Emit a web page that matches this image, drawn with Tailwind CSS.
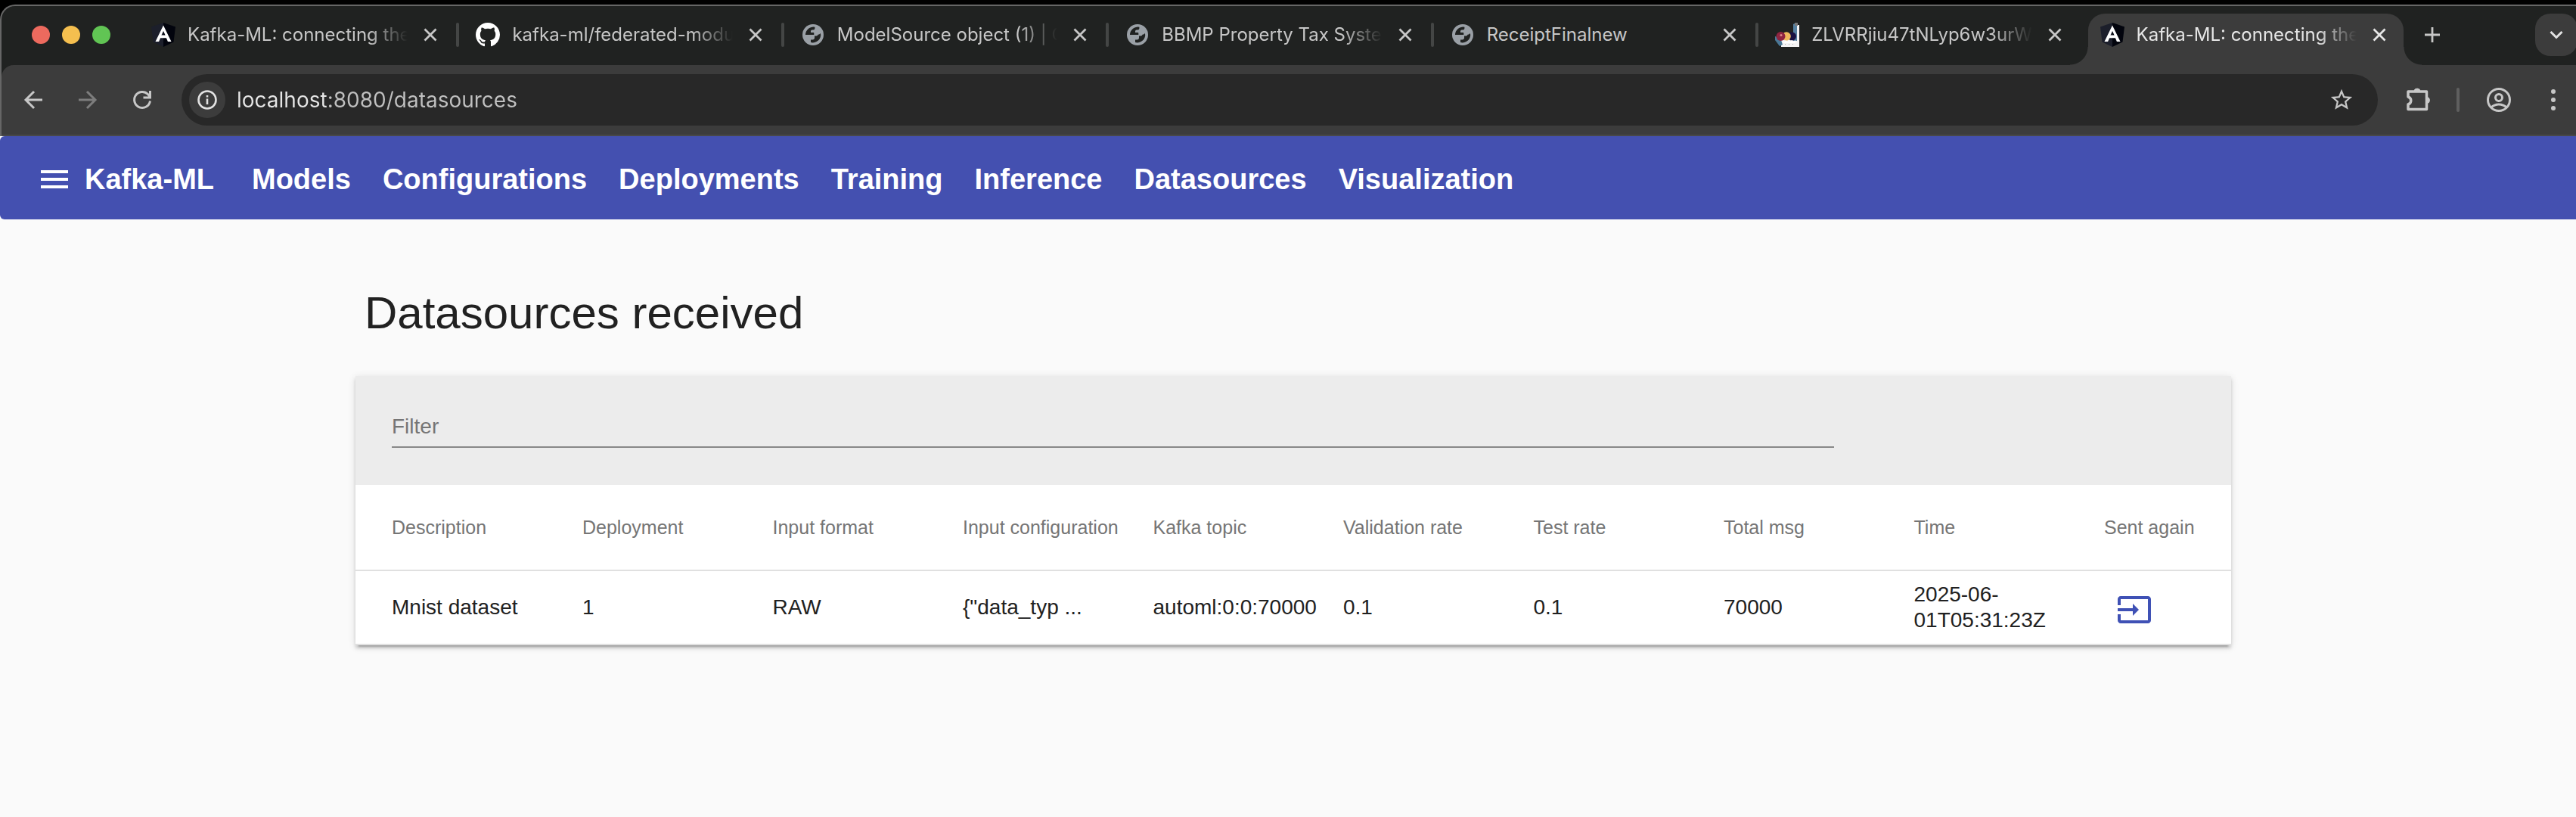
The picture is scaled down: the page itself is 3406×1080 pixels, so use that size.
<!DOCTYPE html>
<html lang="en">
<head>
<meta charset="utf-8">
<title>Kafka-ML: connecting the data stream</title>
<script src="https://cdn.jsdelivr.net/npm/@tailwindcss/browser@4"></script>
</head>
<body class="min-h-screen bg-[#fafafa] font-['Liberation_Sans',Arial,sans-serif] text-[#212121]">

<svg class="hidden" aria-hidden="true">
  <symbol id="close" viewBox="0 0 24 24"><path d="M4.5 4.5l15 15M19.5 4.5l-15 15" fill="none" stroke="currentColor" stroke-width="2.8"/></symbol>
  <symbol id="angular" viewBox="0 0 32 32">
    <path d="M16 0L0 5.5l2.5 20L16 32z" fill="#1c1f2b"/><path d="M16 0l16 5.5-2.5 20L16 32z" fill="#02040d"/>
    <path d="M16 3.5L5.5 25h4.6l2-4.8h7.8l2 4.8h4.6zM16 11l2.6 5.6h-5.2z" fill="#fff" fill-rule="evenodd"/>
  </symbol>
  <symbol id="globe" viewBox="0 0 32 32">
    <circle cx="16" cy="16" r="14" fill="#9aa0a6"/>
    <path d="M6 16A10.4 10.4 0 0 1 18.4 5.8V7.500a2 2 0 0 1-2 2h-1.600a2 2 0 0 0-1.800 2V13h3.500a1 1 0 0 1 .8 1v2z" fill="#202221"/>
    <path d="M26 14A10.400 10.400 0 0 1 13 26v-3.400h2.500a2.500 2.500 0 0 0 2.500-2.400V17.500h2.500a2 2 0 0 0 2-1.800l1.500-.2z" fill="#202221"/>
  </symbol>
</svg>

<div class="bg-black pt-1.5">
  <header class="overflow-hidden rounded-tl-[20px] border-t-2 border-l-2 border-[#666] bg-[#202221] font-['Inter',sans-serif] text-[#c7c7c7]">
    <div class="flex h-[78px] items-start pt-2.5">
      <div class="flex h-14 w-44 shrink-0 items-center gap-4 pl-10">
        <button class="size-6 rounded-full bg-[#ed6a5e]" aria-label="Close window"></button>
        <button class="size-6 rounded-full bg-[#f5bf4f]" aria-label="Minimise window"></button>
        <button class="size-6 rounded-full bg-[#61c554]" aria-label="Zoom window"></button>
      </div>
      <ul class="grid min-w-0 flex-1 grid-cols-7 text-2xl">
        <li class="flex h-14 min-w-0 items-center pl-[22px]">
          <svg class="size-8 shrink-0"><use href="#angular"/></svg>
          <span class="ml-4 min-w-0 flex-1 overflow-hidden whitespace-nowrap [mask-image:linear-gradient(to_right,#000_82%,transparent)]">Kafka-ML: connecting the data</span>
          <button class="ml-[18px] shrink-0" aria-label="Close tab"><svg class="size-6"><use href="#close"/></svg></button>
          <span class="ml-[22px] h-8 w-1 shrink-0 rounded-full bg-[#444645]"></span>
        </li>
        <li class="flex h-14 min-w-0 items-center pl-[22px]">
          <svg class="size-8 shrink-0" viewBox="0 0 16 16" fill="#fff"><path d="M8 0C3.580 0 0 3.580 0 8c0 3.540 2.290 6.530 5.470 7.590.4.070.55-.17.55-.38 0-.19-.01-.82-.01-1.490-2.010.37-2.530-.49-2.690-.94-.09-.23-.48-.94-.82-1.130-.28-.15-.68-.52-.01-.53.63-.01 1.080.58 1.230.82.72 1.210 1.870.87 2.330.66.07-.52.28-.87.51-1.070-1.780-.2-3.640-.89-3.640-3.950 0-.87.31-1.590.82-2.150-.08-.2-.36-1.020.08-2.120 0 0 .67-.21 2.200.82.64-.18 1.320-.27 2-.27s1.360.09 2 .27c1.530-1.040 2.200-.82 2.200-.82.44 1.100.16 1.920.08 2.120.51.56.82 1.270.82 2.150 0 3.070-1.870 3.750-3.650 3.950.29.25.54.73.54 1.480 0 1.070-.01 1.930-.01 2.200 0 .21.15.46.55.38A8.010 8.010 0 0 0 16 8c0-4.420-3.580-8-8-8z"/></svg>
          <span class="ml-4 min-w-0 flex-1 overflow-hidden whitespace-nowrap [mask-image:linear-gradient(to_right,#000_82%,transparent)]">kafka-ml/federated-module</span>
          <button class="ml-[18px] shrink-0" aria-label="Close tab"><svg class="size-6"><use href="#close"/></svg></button>
          <span class="ml-[22px] h-8 w-1 shrink-0 rounded-full bg-[#444645]"></span>
        </li>
        <li class="flex h-14 min-w-0 items-center pl-[22px]">
          <svg class="size-8 shrink-0"><use href="#globe"/></svg>
          <span class="ml-4 min-w-0 flex-1 overflow-hidden whitespace-nowrap [mask-image:linear-gradient(to_right,#000_82%,transparent)]">ModelSource object (1) | Change</span>
          <button class="ml-[18px] shrink-0" aria-label="Close tab"><svg class="size-6"><use href="#close"/></svg></button>
          <span class="ml-[22px] h-8 w-1 shrink-0 rounded-full bg-[#444645]"></span>
        </li>
        <li class="flex h-14 min-w-0 items-center pl-[22px]">
          <svg class="size-8 shrink-0"><use href="#globe"/></svg>
          <span class="ml-4 min-w-0 flex-1 overflow-hidden whitespace-nowrap [mask-image:linear-gradient(to_right,#000_82%,transparent)]">BBMP Property Tax System</span>
          <button class="ml-[18px] shrink-0" aria-label="Close tab"><svg class="size-6"><use href="#close"/></svg></button>
          <span class="ml-[22px] h-8 w-1 shrink-0 rounded-full bg-[#444645]"></span>
        </li>
        <li class="flex h-14 min-w-0 items-center pl-[22px]">
          <svg class="size-8 shrink-0"><use href="#globe"/></svg>
          <span class="ml-4 min-w-0 flex-1 overflow-hidden whitespace-nowrap">ReceiptFinalnew</span>
          <button class="ml-[18px] shrink-0" aria-label="Close tab"><svg class="size-6"><use href="#close"/></svg></button>
          <span class="ml-[22px] h-8 w-1 shrink-0 rounded-full bg-[#444645]"></span>
        </li>
        <li class="flex h-14 min-w-0 items-center pl-[22px]">
          <svg class="size-8 shrink-0" viewBox="0 0 32 32">
            <path d="M27 3h5v29H8V21h19z" fill="#f4f4f4"/><path d="M24 2l4-2h1v24h-5z" fill="#5580a0"/><path d="M26 0h4v4h-4z" fill="#777"/>
            <path d="M0 18l7 2 3 9-4 2-6-8z" fill="#4a7896"/>
            <circle cx="22.500" cy="18" r="5.500" fill="#1b1242"/><circle cx="15" cy="18" r="5.800" fill="#f0b95c"/><circle cx="7.500" cy="18" r="6" fill="#8f2440"/><circle cx="8" cy="16.500" r="1.500" fill="#d88"/>
            <path d="M11 24l2 1 1-2 2 2 2-2 2 2 2-2 2 2 3-2v4H11z" fill="#fff"/><path d="M13 28h1v1h-1zM18 28h1v1h-1zM23 28h1v1h-1z" fill="#aaa"/>
          </svg>
          <span class="ml-4 min-w-0 flex-1 overflow-hidden whitespace-nowrap [mask-image:linear-gradient(to_right,#000_82%,transparent)]">ZLVRRjiu47tNLyp6w3urWx</span>
          <button class="mr-[26px] ml-[18px] shrink-0" aria-label="Close tab"><svg class="size-6"><use href="#close"/></svg></button>
        </li>
        <li class="relative mx-1.5 flex h-[68px] min-w-0 items-start rounded-t-[22px] bg-[#3c3c3c] text-[#e6e6e6]">
          <span class="absolute bottom-0 -left-6 size-6 bg-[radial-gradient(circle_at_0_0,transparent_23px,#3c3c3c_24px)]"></span>
          <span class="absolute -right-6 bottom-0 size-6 bg-[radial-gradient(circle_at_100%_0,transparent_23px,#3c3c3c_24px)]"></span>
          <div class="flex h-14 min-w-0 flex-1 items-center pr-5 pl-4">
            <svg class="size-8 shrink-0"><use href="#angular"/></svg>
            <span class="ml-4 min-w-0 flex-1 overflow-hidden whitespace-nowrap [mask-image:linear-gradient(to_right,#000_82%,transparent)]">Kafka-ML: connecting the data</span>
            <button class="ml-[18px] shrink-0" aria-label="Close tab"><svg class="size-6"><use href="#close"/></svg></button>
          </div>
        </li>
      </ul>
      <div class="flex h-14 w-[222px] shrink-0 items-center overflow-hidden">
        <button class="flex size-16 shrink-0 items-center justify-center" aria-label="New tab"><svg class="size-6" viewBox="0 0 24 24" fill="none" stroke="currentColor" stroke-width="2.800"><path d="M12 2v20M2 12h20"/></svg></button>
        <button class="ml-[104px] flex size-14 shrink-0 items-center justify-center rounded-[20px] bg-[#3c3c3c] text-[#e3e3e3]" aria-label="Search tabs"><svg class="size-6" viewBox="0 0 24 24" fill="none" stroke="currentColor" stroke-width="3"><path d="M4.500 8l7.500 7.500L19.500 8"/></svg></button>
      </div>
    </div>

    <div class="flex h-[94px] items-center rounded-tl-[16px] border-b-2 border-[#484848] bg-[#3c3c3c] pl-[26px]">
      <button class="shrink-0" aria-label="Back"><svg class="size-8" viewBox="0 0 32 32" fill="none" stroke="currentColor" stroke-width="3"><path d="M28 16H7M17 5L6 16l11 11"/></svg></button>
      <button class="ml-10 shrink-0 text-[#7d7d7d]" aria-label="Forward"><svg class="size-8" viewBox="0 0 32 32" fill="none" stroke="currentColor" stroke-width="3"><path d="M4 16h21M15 5l11 11-11 11"/></svg></button>
      <button class="ml-10 shrink-0" aria-label="Reload"><svg class="size-8" viewBox="0 0 32 32" fill="none" stroke="currentColor" stroke-width="3"><path d="M26.500 17.500A10.500 10.500 0 1 1 23.500 8.500l2.500 3M26.500 4v9h-9"/></svg></button>
      <div class="ml-9 flex h-[68px] min-w-0 flex-1 items-center rounded-full bg-[#282828] pr-[31px] pl-2.5">
        <button class="flex size-12 shrink-0 items-center justify-center rounded-full bg-[#3c3c3c] text-[#e3e3e3]" aria-label="View site information"><svg class="size-[26px]" viewBox="0 0 26 26" fill="none" stroke="currentColor" stroke-width="2.600"><circle cx="13" cy="13" r="11.500"/><path d="M13 11.500V19M13 7v2.600"/></svg></button>
        <input aria-label="Address and search bar" value="localhost:8080/datasources" class="ml-[15px] min-w-0 flex-1 bg-[linear-gradient(to_right,#e6e6e6_121px,#c0c0c0_121px)] bg-clip-text text-[28px] text-transparent outline-none">
        <button class="shrink-0" aria-label="Bookmark this tab"><svg class="size-[34px]" viewBox="0 0 24 24" fill="currentColor"><path d="M22 9.240l-7.190-.62L12 2 9.190 8.630 2 9.240l5.460 4.730L5.820 21 12 17.270 18.180 21l-1.630-7.030L22 9.240zM12 15.400l-3.760 2.270 1-4.280-3.320-2.880 4.380-.38L12 6.100l1.710 4.040 4.380.38-3.320 2.880 1 4.280L12 15.400z"/></svg></button>
      </div>
      <button class="ml-9 shrink-0" aria-label="Extensions"><svg class="size-9" viewBox="0 0 36 36" fill="none" stroke="currentColor" stroke-width="3.500" stroke-linejoin="round"><path d="M4 7h24.500v23.500H4V24a5.200 5.200 0 0 0 0-10z"/><path d="M12 7a4 4 0 0 1 8 0zM28.500 14.500a4 4 0 0 1 0 8z" fill="currentColor" stroke-width="1"/></svg></button>
      <span class="ml-8 h-8 w-1 shrink-0 rounded-full bg-[#5f5f5f]"></span>
      <button class="ml-9 shrink-0" aria-label="Profile"><svg class="size-8" viewBox="0 0 32 32" fill="none" stroke="currentColor" stroke-width="3"><circle cx="16" cy="16" r="14.500"/><circle cx="16" cy="13" r="4.500"/><path d="M6 26c5-5.500 15-5.500 20 0"/></svg></button>
      <button class="mr-3.5 ml-10 shrink-0" aria-label="Menu"><svg class="size-8" viewBox="0 0 32 32" fill="currentColor"><circle cx="16" cy="5" r="3"/><circle cx="16" cy="16" r="3"/><circle cx="16" cy="27" r="3"/></svg></button>
    </div>
  </header>
</div>

<nav class="flex h-[110px] items-center rounded-l-md bg-[#4450b0] pt-1 pl-12 text-[38px] leading-none font-bold whitespace-nowrap text-white">
  <button class="shrink-0" aria-label="Toggle menu"><svg class="size-12" viewBox="0 0 24 24" fill="currentColor"><path d="M3 18h18v-2H3v2zm0-5h18v-2H3v2zm0-7v2h18V6H3z"/></svg></button>
  <div class="ml-4 flex gap-[42px]">
    <a href="#" class="w-[179px]">Kafka-ML</a>
    <a href="#">Models</a>
    <a href="#">Configurations</a>
    <a href="#">Deployments</a>
    <a href="#">Training</a>
    <a href="#">Inference</a>
    <a href="#">Datasources</a>
    <a href="#">Visualization</a>
  </div>
</nav>

<main class="pt-[94px] pr-[456px] pb-16 pl-[470px]">
  <h1 class="ml-3 text-[60px] leading-none">Datasources received</h1>
  <section class="mt-[53px] bg-white shadow-[0_6px_2px_-4px_rgba(0,0,0,0.2),0_4px_4px_0_rgba(0,0,0,0.14),0_2px_10px_0_rgba(0,0,0,0.12)]">
    <div class="h-36 bg-[#ececec] px-12 pt-[47px]">
      <input type="text" aria-label="Filter" placeholder="Filter" class="block h-12 w-4/5 border-b-2 border-[#888] pb-1.5 text-[28px] outline-none placeholder:text-[#757575]">
    </div>
    <table class="w-full table-fixed text-left text-[28px] leading-[34px]">
      <colgroup><col class="w-[300px]"><col><col><col><col><col><col><col><col><col class="w-[168px]"></colgroup>
      <thead>
        <tr class="h-[113px] border-b-2 border-[#e0e0e0] text-[25px] whitespace-nowrap text-[#757575]">
          <th class="pl-12 font-normal">Description</th>
          <th class="font-normal">Deployment</th>
          <th class="font-normal">Input format</th>
          <th class="font-normal">Input configuration</th>
          <th class="font-normal">Kafka topic</th>
          <th class="font-normal">Validation rate</th>
          <th class="font-normal">Test rate</th>
          <th class="font-normal">Total msg</th>
          <th class="font-normal">Time</th>
          <th class="font-normal">Sent again</th>
        </tr>
      </thead>
      <tbody>
        <tr class="h-[98px] border-b-2 border-[#e0e0e0]">
          <td class="pl-12">Mnist dataset</td>
          <td>1</td>
          <td>RAW</td>
          <td>{"data_typ ...</td>
          <td>automl:0:0:70000</td>
          <td>0.1</td>
          <td>0.1</td>
          <td>70000</td>
          <td>2025-06-01T05:31:23Z</td>
          <td>
            <button class="flex h-20 w-20 items-center justify-center pt-1.5 text-[#3f51b5]" aria-label="Send again"><svg class="size-12" viewBox="0 0 24 24" fill="currentColor"><path d="M21 3.010H3c-1.100 0-2 .9-2 2V9h2V4.990h18v14.030H3V15H1v4.010c0 1.100.9 1.980 2 1.980h18c1.100 0 2-.88 2-1.980v-14c0-1.110-.9-2-2-2zM11 16l4-4-4-4v3H1v2h10v3z"/></svg></button>
          </td>
        </tr>
      </tbody>
    </table>
  </section>
</main>
</body>
</html>
